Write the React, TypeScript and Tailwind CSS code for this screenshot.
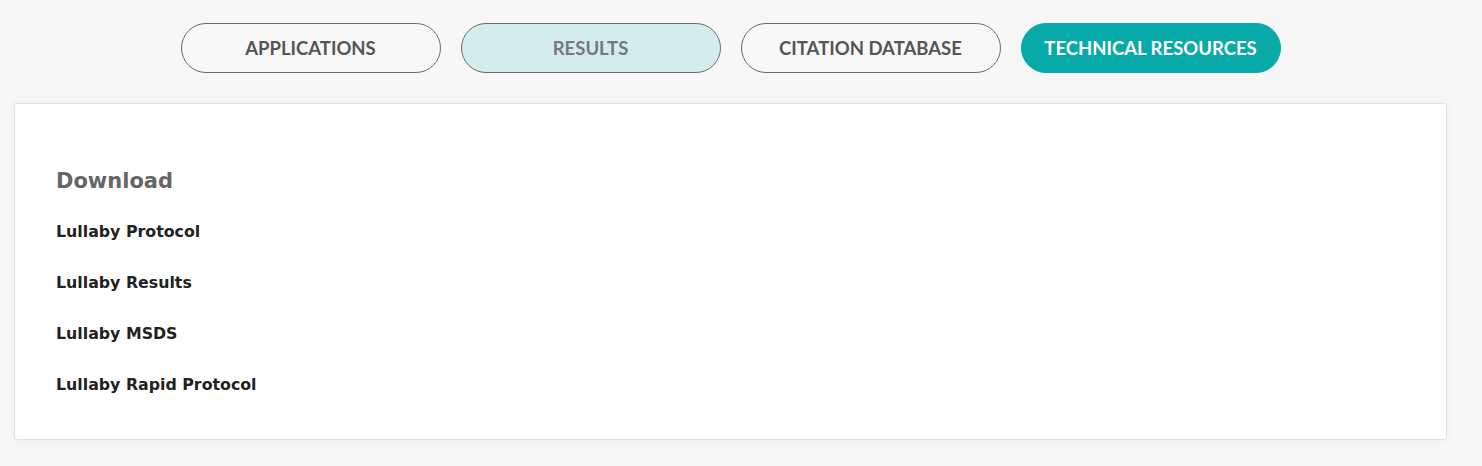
import React from 'react';

const tabs = [
  { label: 'APPLICATIONS', style: 'border border-[#6b6b6b] bg-[#f8f8f8] text-[#555555]' },
  { label: 'RESULTS', style: 'border border-[#6b6b6b] bg-[#d4ecec] text-[#787878]' },
  { label: 'CITATION DATABASE', style: 'border border-[#6b6b6b] bg-[#f8f8f8] text-[#555555]' },
  { label: 'TECHNICAL RESOURCES', style: 'border border-[#07aaa9] bg-[#07aaa9] text-white' },
];

const downloads = ['Lullaby Protocol', 'Lullaby Results', 'Lullaby MSDS', 'Lullaby Rapid Protocol'];

export default function App() {
  return (
    <div className="min-h-[466px] bg-[#f7f7f7] pl-[14px] pr-[35px] pt-[23px] pb-[26px]">
      {/* tabs */}
      <div className="flex justify-center gap-[20px]">
        {tabs.map((t) => (
          <button
            key={t.label}
            className={`h-[50px] w-[260px] rounded-full pt-[2px] font-['Lato',sans-serif] text-[18.5px] font-bold ${t.style}`}
          >
            {t.label}
          </button>
        ))}
      </div>

      {/* panel */}
      <div className="mt-[30px] h-[337px] rounded-[3px] border border-[#e3e3e3] bg-white px-[41px] pt-[62px] shadow-[0_0_8px_rgba(0,0,0,0.05)] font-['DejaVu_Sans',sans-serif]">
        <h2 className="text-[21px] font-bold leading-[30px] text-[#666666]">Download</h2>
        <ul className="mt-[26px] flex flex-col gap-[31px]">
          {downloads.map((d) => (
            <li key={d} className="leading-[20px]">
              <a className="text-[15.8px] font-bold leading-[20px] text-[#222222]" href="#">
                {d}
              </a>
            </li>
          ))}
        </ul>
      </div>
    </div>
  );
}
